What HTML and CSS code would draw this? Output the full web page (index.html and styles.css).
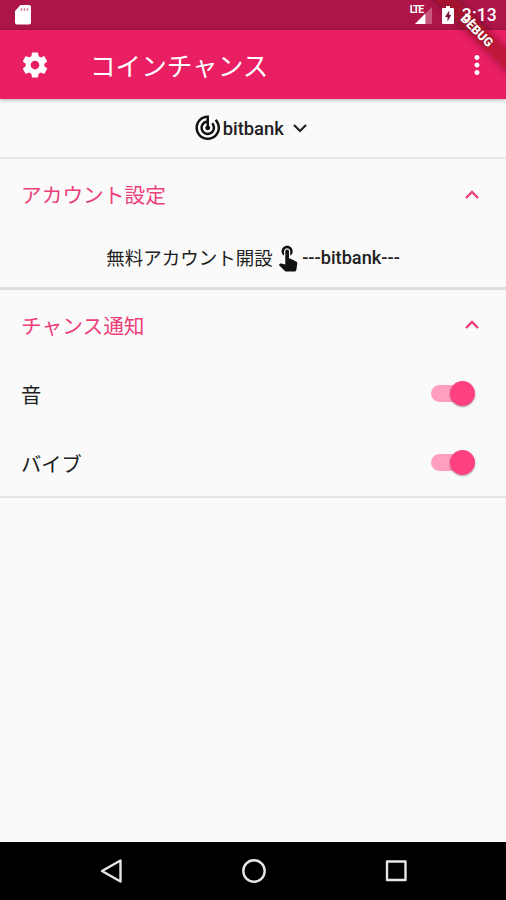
FILE: index.html
```html
<!DOCTYPE html>
<html lang="ja">
<head>
  <meta charset="UTF-8">
  <meta name="viewport" content="width=device-width, initial-scale=1.0">
  <title>コインチャンス</title>
  <link rel="stylesheet" href="styles.css">
</head>
<body>
  <div class="statusbar">
    <svg class="sd" viewBox="0 0 16 20"><path d="M5.500 0H14a2 2 0 0 1 2 2v15.500a2 2 0 0 1-2 2H2a2 2 0 0 1-2-2V6z" fill="#fff"/><path d="M6.500 3.200v2.500M9.500 3.200v2.500M12.500 3.200v2.500" stroke="#c77a94" stroke-width="1.500"/></svg>
    <div class="signal">
      <svg viewBox="0 0 18 18"><path d="M18 0v18H0z" fill="#c8577f"/><path d="M11 7v11H0z" fill="#fff"/></svg>
      <span>LTE</span>
    </div>
    <svg class="battery" viewBox="0 0 12 18"><path d="M4 0h4v2h3a1 1 0 0 1 1 1v14a1 1 0 0 1-1 1H1a1 1 0 0 1-1-1V3a1 1 0 0 1 1-1h3z" fill="#fff"/><path d="M7.200 4.500 3 11h2.500v4.500L9.300 9H7.200z" fill="#7d1238"/></svg>
    <span class="clock">3:13</span>
  </div>

  <header class="appbar">
    <svg class="gear" viewBox="0 0 24 24"><path d="M19.430 12.980c.04-.32.07-.64.07-.98s-.03-.66-.07-.98l2.110-1.650c.19-.15.24-.42.12-.64l-2-3.460c-.12-.22-.39-.3-.61-.22l-2.490 1c-.52-.4-1.080-.73-1.690-.98l-.38-2.650C14.460 2.180 14.250 2 14 2h-4c-.25 0-.46.18-.49.42l-.38 2.650c-.61.25-1.170.59-1.690.98l-2.490-1c-.23-.09-.49 0-.61.22l-2 3.460c-.13.22-.07.49.12.64l2.110 1.650c-.04.32-.07.65-.07.98s.03.66.07.98l-2.110 1.650c-.19.15-.24.42-.12.64l2 3.460c.12.22.39.3.61.22l2.490-1c.52.4 1.080.73 1.690.98l.38 2.650c.03.24.24.42.49.42h4c.25 0 .46-.18.49-.42l.38-2.650c.61-.25 1.170-.59 1.690-.98l2.490 1c.23.09.49 0 .61-.22l2-3.460c.12-.22.07-.49-.12-.64l-2.110-1.650zM12 15.500c-1.930 0-3.500-1.570-3.500-3.500s1.570-3.500 3.500-3.500 3.500 1.570 3.500 3.500-1.570 3.500-3.500 3.500z"/></svg>
    <h1>コインチャンス</h1>
    <svg class="more" viewBox="0 0 24 24"><path d="M12 8c1.100 0 2-.9 2-2s-.9-2-2-2-2 .9-2 2 .9 2 2 2zm0 2c-1.100 0-2 .9-2 2s.9 2 2 2 2-.9 2-2-.9-2-2-2zm0 6c-1.100 0-2 .9-2 2s.9 2 2 2 2-.9 2-2-.9-2-2-2z"/></svg>
  </header>

  <main>
    <div class="exchange">
      <svg class="icon" viewBox="0 0 24 24"><path d="M19.070 4.930l-1.410 1.410C19.100 7.790 20 9.790 20 12c0 4.420-3.580 8-8 8s-8-3.580-8-8c0-4.080 3.050-7.440 7-7.930v2.020C8.160 6.570 6 9.030 6 12c0 3.310 2.690 6 6 6s6-2.690 6-6c0-1.660-.67-3.160-1.760-4.240l-1.410 1.410C15.550 9.900 16 10.900 16 12c0 2.210-1.790 4-4 4s-4-1.790-4-4c0-1.860 1.280-3.410 3-3.860v2.140c-.6.35-1 .98-1 1.720 0 1.100.9 2 2 2s2-.9 2-2c0-.74-.4-1.380-1-1.720V2h-1C6.480 2 2 6.480 2 12s4.480 10 10 10 10-4.480 10-10c0-2.760-1.120-5.260-2.930-7.070z"/></svg>
      <span>bitbank</span>
      <svg class="chevron" viewBox="0 0 14 9"><path d="M1 1l6 6 6-6"/></svg>
    </div>

    <section class="account">
      <div class="section-head">
        <h2>アカウント設定</h2>
        <svg class="chevron" viewBox="0 0 14 9"><path d="M1 8l6-6 6 6"/></svg>
      </div>
      <div class="signup">
        <span class="ja">無料アカウント開設</span>
        <svg class="icon" viewBox="0 0 24 24"><path d="M9 11.240V7.500C9 6.120 10.120 5 11.500 5S14 6.120 14 7.500v3.740c1.210-.81 2-2.180 2-3.740C16 5.010 13.990 3 11.500 3S7 5.010 7 7.500c0 1.560.79 2.930 2 3.740zm9.840 4.630l-4.540-2.260c-.17-.07-.35-.11-.54-.11H13v-6c0-.83-.67-1.500-1.500-1.500S10 6.670 10 7.500v10.740l-3.430-.72c-.08-.01-.15-.03-.24-.03-.31 0-.59.13-.79.33l-.79.8 4.940 4.940c.27.27.65.44 1.060.44h6.790c.75 0 1.330-.55 1.440-1.280l.75-5.270c.01-.07.02-.14.02-.2 0-.62-.38-1.160-.91-1.380z"/></svg>
        <span class="name">---bitbank---</span>
      </div>
    </section>

    <section class="notice">
      <div class="section-head">
        <h2>チャンス通知</h2>
        <svg class="chevron" viewBox="0 0 14 9"><path d="M1 8l6-6 6 6"/></svg>
      </div>
      <div class="setting"><span>音</span><div class="switch"><i></i></div></div>
      <div class="setting"><span>バイブ</span><div class="switch"><i></i></div></div>
    </section>
  </main>

  <nav class="navbar">
    <svg viewBox="0 0 24 24"><path d="M21.500 1.500v21L3 12z"/></svg>
    <svg viewBox="0 0 24 24"><circle cx="12" cy="12" r="10.700"/></svg>
    <svg viewBox="0 0 24 24"><rect x="3" y="2.500" width="18.500" height="18.500"/></svg>
  </nav>

  <div class="banner"><span>DEBUG</span></div>
</body>
</html>
```
FILE: styles.css
```css
* {
  box-sizing: border-box;
}
body {
  margin: 0;
  height: 900px;
  display: flex;
  flex-direction: column;
  position: relative;
  overflow: hidden;
  background: #fafafa;
  color: #212121;
  font-family: Roboto, "Noto Sans CJK JP", sans-serif;
}
svg {
  display: block;
  flex: none;
}
h1, h2 {
  margin: 0;
  font-weight: 400;
}

/* status bar */
.statusbar {
  height: 30px;
  display: flex;
  align-items: center;
  padding: 0 9px 0 15px;
  background: #ad1448;
  color: #fff;
}
.sd {
  width: 16px;
  height: 20px;
}
.signal {
  position: relative;
  margin-left: auto;
  margin-right: 10px;
}
.signal svg {
  width: 17px;
  height: 17px;
}
.signal span {
  position: absolute;
  left: -5px;
  top: -2px;
  padding-right: 1px;
  background: #ad1448;
  font-size: 10.5px;
  line-height: 9px;
  font-weight: 700;
  letter-spacing: -1.3px;
}
.battery {
  width: 12px;
  height: 18px;
  margin-right: 8px;
}
/* system icons stay on top of the ribbon */
.battery, .clock {
  position: relative;
  z-index: 2;
}
.clock {
  font-size: 17.5px;
  font-weight: 500;
  letter-spacing: 0.2px;
}

/* app bar */
.appbar {
  height: 69px;
  flex: none;
  display: flex;
  align-items: center;
  padding: 0 14px 0 20px;
  background: #e91e63;
  color: #fff;
  box-shadow: 0 1px 4px rgba(0, 0, 0, 0.3);
}
.appbar svg {
  width: 30px;
  height: 30px;
  fill: #fff;
}
.appbar h1 {
  margin-left: 40px;
  padding-bottom: 1px;
  font-size: 25.6px;
}
.more {
  margin-left: auto;
}

/* content */
main {
  flex: 1;
}
.icon {
  width: 29.5px;
  height: 29.5px;
  fill: #111;
}
.chevron {
  width: 14px;
  height: 9px;
  fill: none;
  stroke: #212121;
  stroke-width: 2.2;
}
.exchange {
  height: 60px;
  display: flex;
  align-items: center;
  justify-content: center;
  padding-right: 6px;
  border-bottom: 2px solid #e9e9e9;
  font-size: 18.4px;
  font-weight: 500;
}
.exchange .chevron {
  margin-left: 9px;
}
.account {
  height: 131px;
  border-bottom: 3px solid #dedede;
}
.notice {
  height: 208px;
  border-bottom: 2px solid #e4e4e4;
}
.section-head {
  height: 70px;
  display: flex;
  align-items: center;
  justify-content: space-between;
  padding: 0 27px 0 21px;
}
.notice .section-head {
  height: 69px;
}
.section-head h2 {
  color: #ec407a;
  font-size: 20.7px;
}
.section-head .chevron {
  stroke: #ec407a;
  stroke-width: 2.4;
}
.signup {
  height: 56px;
  display: flex;
  align-items: center;
  justify-content: center;
}
.signup .ja {
  font-size: 18.5px;
}
.signup .name {
  font-size: 18.2px;
  font-weight: 500;
}
.setting {
  height: 69px;
  display: flex;
  align-items: center;
  justify-content: space-between;
  padding: 0 31px 0 21px;
  font-size: 20.3px;
}
.switch {
  width: 44px;
  height: 25px;
  display: flex;
  align-items: center;
}
.switch::before {
  content: "";
  width: 36px;
  height: 17px;
  border-radius: 9px;
  background: #ff9ebf;
}
.switch i {
  flex: none;
  width: 25px;
  height: 25px;
  margin-left: -17px;
  border-radius: 50%;
  background: #ff4081;
  box-shadow: 0 1px 2px rgba(0, 0, 0, 0.35);
}

/* navigation bar */
.navbar {
  height: 58px;
  flex: none;
  display: flex;
  align-items: center;
  justify-content: space-between;
  padding: 0 98px 0 99px;
  background: #000;
}
.navbar svg {
  width: 24px;
  height: 24px;
  fill: none;
  stroke: #e6e6e6;
  stroke-width: 2.4;
  stroke-linejoin: round;
}

/* corner ribbon */
.banner {
  position: absolute;
  left: 417px;
  top: 23px;
  width: 120px;
  height: 15px;
  transform: rotate(45deg);
  background: rgba(160, 20, 32, 0.6);
  box-shadow: 0 0 7px rgba(0, 0, 0, 0.4);
  color: #fff;
  font-size: 12.5px;
  line-height: 15px;
  font-weight: 900;
  text-align: center;
  text-shadow: 0 0 2px #600;
}
```
